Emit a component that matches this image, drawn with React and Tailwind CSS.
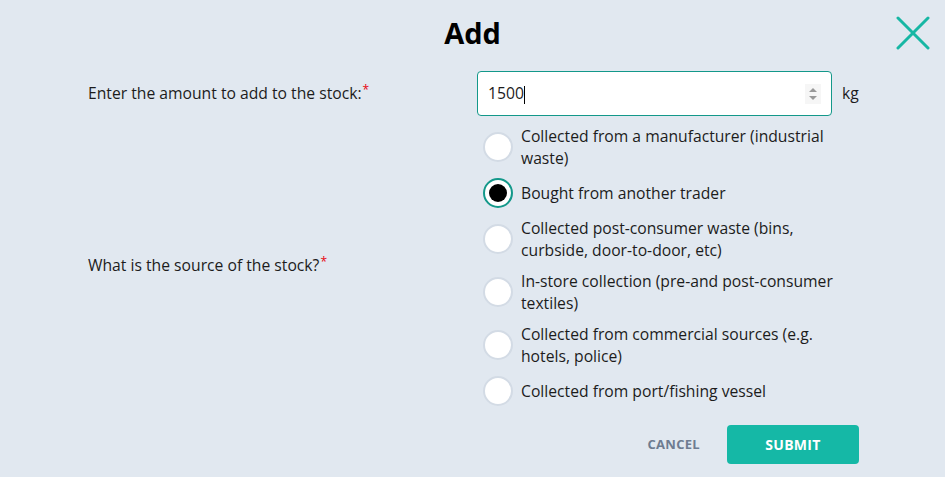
import React, { useState } from 'react';

const OPTIONS = [
  'Collected from a manufacturer (industrial waste)',
  'Bought from another trader',
  'Collected post-consumer waste (bins, curbside, door-to-door, etc)',
  'In-store collection (pre-and post-consumer textiles)',
  'Collected from commercial sources (e.g. hotels, police)',
  'Collected from port/fishing vessel',
];

const Radio = ({ checked }) => (
  <span
    className={`flex h-[30px] w-[30px] shrink-0 items-center justify-center rounded-full bg-white border-2 ${
      checked ? 'border-[#13988a]' : 'border-[#d3dbe5]'
    }`}
  >
    {checked && <span className="h-[18px] w-[18px] rounded-full bg-black" />}
  </span>
);

const Required = () => <span className="text-red-600 text-[12px] relative -top-[5px] ml-[1px]">*</span>;

export default function App() {
  const [source, setSource] = useState(1);

  return (
    <div
      className="w-[945px] h-[477px] bg-[#e1e8f0] text-[#1c1c1c]"
      style={{ fontFamily: '"Open Sans", sans-serif' }}
    >
      {/* header */}
      <div className="relative flex h-[64px] items-center justify-center">
        <h2 className="text-[29px] font-bold text-black leading-none">Add</h2>
        <button className="absolute right-[14px] top-[16px] text-[#17b7a4]" title="Close">
          <svg width="36" height="36" viewBox="0 0 36 36" fill="none" stroke="currentColor" strokeWidth="3" strokeLinecap="round">
            <path d="M3 2 L33 32 M33 2 L3 32" />
          </svg>
        </button>
      </div>

      {/* form */}
      <div className="grid grid-cols-[389px_382px] pl-[88px] text-[15.7px]">
        <div className="flex items-center h-[45px] mt-[7px]">
          <span>Enter the amount to add to the stock:<Required /></span>
        </div>
        <div className="flex items-center gap-[10px] mt-[7px]">
          <div className="flex h-[45px] w-[355px] items-center rounded-[4px] border border-[#13988a] bg-white pl-[10px] pr-[10px]">
            <span className="flex-1">1500<span className="inline-block w-[1px] h-[18px] bg-black align-middle" /></span>
            <span className="flex flex-col items-center justify-center gap-[4px] w-[16px] h-[20px] bg-[#f6f6f6]">
              <span className="w-0 h-0 border-x-[4px] border-x-transparent border-b-[4px] border-b-[#999]" />
              <span className="w-0 h-0 border-x-[4px] border-x-transparent border-t-[4px] border-t-[#999]" />
            </span>
          </div>
          <span>kg</span>
        </div>

        <div className="flex items-center pt-[10px]">
          <span>What is the source of the stock?<Required /></span>
        </div>
        <div className="flex flex-col pt-[9px] gap-[9px]">
          {OPTIONS.map((opt, i) => (
            <label
              key={i}
              onClick={() => setSource(i)}
              className="flex items-center gap-[8px] cursor-pointer pl-[6px]"
            >
              <Radio checked={source === i} />
              <span className="leading-[22px] w-[325px]">{opt}</span>
            </label>
          ))}
        </div>

        <div />
        <div className="flex items-center justify-end gap-[27px] mt-[19px]">
          <button className="text-[13px] font-bold tracking-[0.3px] text-[#6e7c91]">CANCEL</button>
          <button className="h-[39px] w-[132px] rounded-[4px] bg-[#15b8a6] text-[14px] font-bold text-white tracking-[0.3px]">
            SUBMIT
          </button>
        </div>
      </div>
    </div>
  );
}
